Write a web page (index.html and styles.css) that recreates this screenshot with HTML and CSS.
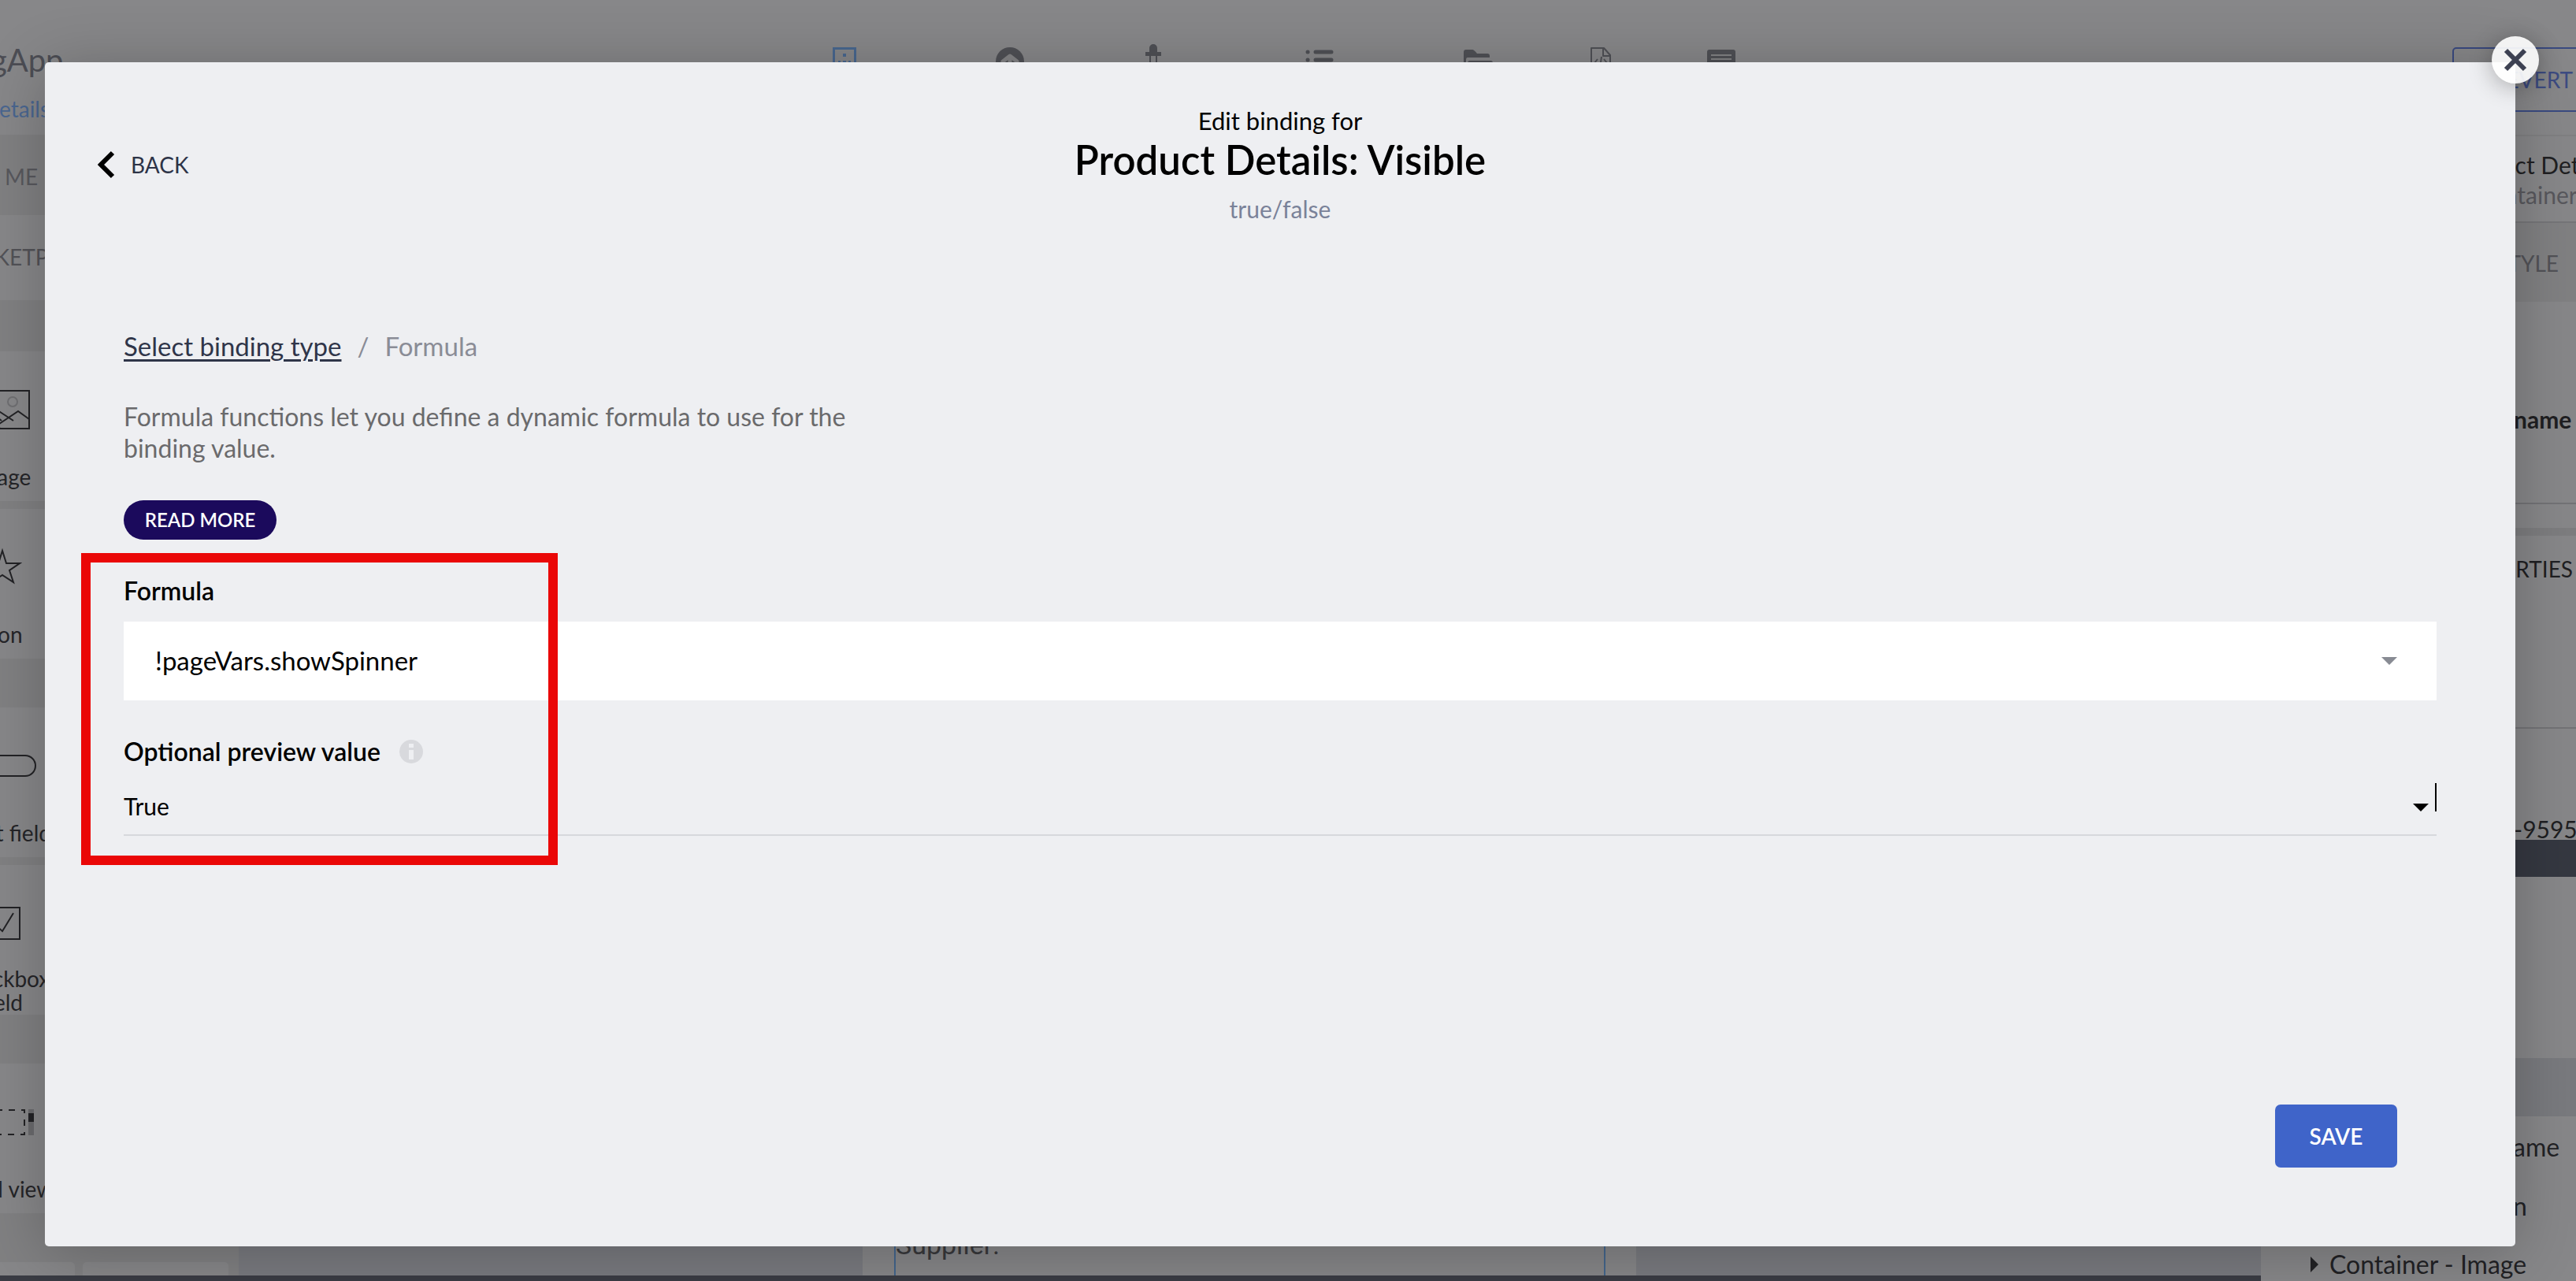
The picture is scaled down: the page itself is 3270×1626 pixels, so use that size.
FILE: index.html
```html
<!DOCTYPE html>
<html lang="en">
<head>
<meta charset="utf-8">
<title>Edit binding</title>
<link rel="stylesheet" href="styles.css">
</head>
<body>
<div class="app">
  <header class="topbar">
    <div class="brand">
      <span class="app-name">gApp</span>
      <a class="page-link" href="#">etails</a>
    </div>
    <nav class="tools">
      <svg class="tool active" viewBox="0 0 30 32" width="30" height="32"><path fill="none" stroke="currentColor" stroke-width="3" d="M1.500 1.500h27v28h-27z"/><path fill="currentColor" d="M13 8h4v4h-4zM7 17h3v4H7zM13 17h4v4h-4zM20 17h3v4h-3zM7 24h3v3H7zM13 24h4v3h-4zM20 24h3v3h-3z"/></svg>
      <svg class="tool" viewBox="0 0 36 36" width="36" height="36"><circle cx="18" cy="18" r="18" fill="currentColor"/><path class="cut" fill="none" stroke-width="5" stroke-linejoin="round" stroke-linecap="round" d="M9 18l9-7 9 7M18 13v15"/></svg>
      <svg class="tool pin" viewBox="0 0 20 40" width="20" height="40"><path fill="currentColor" d="M5 10V5a5 5 0 0 1 10 0v5h5v5H0v-5z"/><path fill="none" stroke="currentColor" stroke-width="2" d="M6 15v24M14 15v24"/></svg>
      <svg class="tool" viewBox="0 0 36 30" width="36" height="30"><path fill="none" stroke="currentColor" stroke-width="5" stroke-linecap="round" d="M3 6h.1M13 6h20M3 16h.1M13 16h20M3 26h.1M13 26h20"/></svg>
      <svg class="tool" viewBox="0 0 38 32" width="38" height="32"><path fill="currentColor" d="M0 28V6q0-3 3-3h8q2 0 6 5h13q3 0 3 3v2H5q-2 0-2 3v12zM5 32V20q0-3 3-3h26q3 0 3 3l-2 12z"/></svg>
      <svg class="tool" viewBox="0 0 26 34" width="26" height="34"><path fill="none" stroke="currentColor" stroke-width="2" stroke-linejoin="round" d="M1 1h16l8 9v23H1zM16 1v10h9M9 15l-4 5 4 5M14 12l-2 14M17 15l4 5-4 5"/></svg>
      <svg class="tool" viewBox="0 0 36 32" width="36" height="32"><rect y="3" width="36" height="28" rx="3" fill="currentColor"/><path class="cut" stroke-width="2" d="M5 10h26M5 15h26M5 20h26M5 25h26"/></svg>
    </nav>
    <button class="revert" type="button">REVERT</button>
  </header>

  <aside class="library">
    <div class="lib-tabs">ME</div>
    <div class="lib-market">MARKETPLACE</div>
    <div class="cards">
      <div class="card">
        <svg class="card-icon" viewBox="0 0 71 50" width="71" height="50"><path d="M1 1h69v48H1zM1 42l23-20 26 17M1 12l34 27M34 49l-8-2 30-20 14 10"/><circle class="faint" cx="49" cy="15" r="6"/></svg>
        <span class="card-label">Image</span>
      </div>
      <div class="card"></div>
      <div class="card">
        <svg class="card-icon" viewBox="0 0 50 48" width="50" height="48"><path d="M25 3l5 16h17L34 28l5 15-14-9-14 9 5-15L3 19h17z"/></svg>
        <span class="card-label">Icon</span>
      </div>
      <div class="card"></div>
    </div>
    <div class="cards">
      <div class="card">
        <svg class="card-icon" viewBox="0 0 87 28" width="87" height="28"><rect x="1" y="1" width="85" height="26" rx="13"/></svg>
        <span class="card-label">Input field</span>
      </div>
      <div class="card"></div>
      <div class="card">
        <svg class="card-icon" viewBox="0 0 46 42" width="46" height="42"><path d="M1 1h44v40H1zM11 20l12 11L37 8"/></svg>
        <span class="card-label">Checkbox field</span>
      </div>
      <div class="card"></div>
    </div>
    <div class="cards">
      <div class="card">
        <svg class="card-icon" viewBox="0 0 81 33" width="81" height="33"><rect x="1" y="1" width="68" height="31" stroke-dasharray="8 8"/><path class="fill-faint" d="M74 0h7v33h-7z"/><path class="fill" d="M74 5h7v11h-7z"/></svg>
        <span class="card-label">Scroll view</span>
      </div>
      <div class="card"></div>
    </div>
    <div class="cards">
      <div class="card"></div>
      <div class="card"></div>
    </div>
  </aside>

  <main class="canvas">
    <div class="screen"><div class="selected">Supplier:</div></div>
  </main>
  <div class="statusbar"></div>

  <aside class="inspector">
    <div class="insp-head"><strong>Product Details</strong><span>Container</span></div>
    <div class="insp-tabs">STYLE</div>
    <div class="insp-name">name</div>
    <div class="insp-section">PROPERTIES</div>
    <div class="insp-blank"></div>
    <div class="insp-id">-9595</div>
    <div class="insp-bar"></div>
    <div class="insp-space"></div>
    <div class="insp-selected"></div>
    <ul class="tree">
      <li class="tree-name">ame</li>
      <li class="tree-end">n</li>
      <li class="tree-item"><svg viewBox="0 0 10 20" width="10" height="20"><path fill="currentColor" d="M0 0l10 10L0 20z"/></svg>Container - Image</li>
    </ul>
  </aside>
</div>

<section class="modal" role="dialog" aria-labelledby="modal-title">
  <button class="close" type="button" aria-label="Close"><svg viewBox="0 0 30 30" width="30" height="30"><path fill="none" stroke="currentColor" stroke-width="6" d="M3 3l24 24M27 3L3 27"/></svg></button>
  <header class="modal-head">
    <button class="back" type="button"><svg viewBox="0 0 22 36" width="22" height="36"><path fill="none" stroke="currentColor" stroke-width="6" d="M19 3L4 18l15 15"/></svg>BACK</button>
    <div class="heading">
      <p class="overline">Edit binding for</p>
      <h1 id="modal-title">Product Details: Visible</h1>
      <p class="type">true/false</p>
    </div>
  </header>
  <div class="modal-body">
    <nav class="crumbs"><a href="#">Select binding type</a><span>/</span><span>Formula</span></nav>
    <p class="intro">Formula functions let you define a dynamic formula to use for the binding value.</p>
    <button class="read-more" type="button">READ MORE</button>
    <form class="fields">
      <label class="label" for="formula">Formula</label>
      <div class="formula-box">
        <input id="formula" type="text" value="!pageVars.showSpinner">
        <svg class="arrow muted" viewBox="0 0 20 10" width="20" height="10"><path fill="currentColor" d="M0 0h20L10 10z"/></svg>
      </div>
      <div class="label-row">
        <label class="label" for="preview">Optional preview value</label>
        <svg viewBox="0 0 30 30" width="30" height="30"><circle cx="15" cy="15" r="15" fill="#d8d9dd"/><path fill="#eeeff2" d="M12 5h6v5h-6zM12 13h6v12h-6z"/></svg>
      </div>
      <div class="preview-box">
        <select id="preview"><option>True</option><option>False</option></select>
        <svg class="arrow" viewBox="0 0 20 10" width="20" height="10"><path fill="currentColor" d="M0 0h20L10 10z"/></svg>
        <span class="caret"></span>
      </div>
      <div class="highlight"></div>
    </form>
  </div>
  <footer class="modal-foot"><button class="save" type="button">SAVE</button></footer>
</section>
</body>
</html>
```
FILE: styles.css
```css
* { box-sizing: border-box; }

body {
  margin: 0;
  height: 100vh;
  overflow: hidden;
  position: relative;
  font-family: Lato, "Open Sans", sans-serif;
  font-size: 28px;
  color: #1f1f22;
  background: #878789;
}

h1, p, ul { margin: 0; padding: 0; font-weight: 400; }
button, input, select { font: inherit; margin: 0; padding: 0; border: 0; background: none; color: inherit; }
svg { display: block; flex: none; }

/* Editor behind the dialog, scrolled 100px to the left */
.app {
  margin-left: -100px;
  height: 100%;
  display: grid;
  grid-template: 171px minmax(0, 1fr) 7px / 403px minmax(0, 1fr) 400px;
}

.topbar {
  grid-column: 1 / -1;
  display: flex;
  align-items: flex-start;
  overflow: hidden;
}
.brand {
  flex: 0 0 1066px;
  padding: 52px 0 0 88px;
  display: flex;
  flex-direction: column;
}
.app-name { font-size: 40px; line-height: 48px; color: #4c4d54; }
.page-link { line-height: 36px; margin-top: 20px; padding-left: 11px; color: #4a6690; text-decoration: none; }
.tools {
  display: grid;
  grid-template-columns: 211px 210px 154px 268px 136px 174px 132px;
  justify-items: center;
  align-items: start;
  padding-top: 60px;
  color: #4f5055;
}
.tools .active { color: #48678f; }
.tools .pin { margin-top: -4px; }
.cut { stroke: #838385; }
.revert {
  flex: 0 0 204px;
  height: 82px;
  margin: 60px -47px 0 auto;
  border: 2px solid #3a4a80;
  border-radius: 5px;
  color: #3d4c82;
}

.library { background: #808082; overflow: hidden; }
.lib-tabs { height: 102px; line-height: 106px; padding-left: 106px; color: #58585d; }
.lib-market { height: 108px; line-height: 106px; padding-left: 31px; background: #878789; color: #525257; }
.cards {
  display: grid;
  grid-template-columns: 185px 185px;
  grid-auto-rows: 190px;
  gap: 10px;
  padding: 62px 10px 0;
}
.lib-market + .cards { padding-top: 65px; }
.card {
  display: grid;
  grid-template-rows: 148px 22px;
  justify-items: center;
  align-items: center;
  border-radius: 5px;
  background: #878789;
}
.card-icon { fill: none; stroke: #222225; stroke-width: 2; }
.card-icon .faint { stroke: #6f6f72; }
.card-icon .fill { fill: #222225; stroke: none; }
.card-icon .fill-faint { fill: #6a6a6d; stroke: none; }
.card-label { line-height: 30px; padding: 0 10px; text-align: center; color: #252528; }

.canvas { display: flex; justify-content: center; background: #797a7f; }
.screen { width: 982px; margin-right: 1px; padding: 0 39px 0 40px; background: #868688; display: flex; }
.selected {
  flex: 1;
  display: flex;
  align-items: flex-end;
  padding-bottom: 19px;
  border: solid #43658c;
  border-width: 0 2px;
  font: 34px/40px Roboto, sans-serif;
  color: #38383b;
}
.statusbar { grid-column: 1 / 3; background: #3a3c44; }

.inspector {
  grid-area: 2 / 3 / 4 / 4;
  display: flex;
  flex-direction: column;
  overflow: hidden;
  white-space: nowrap;
  background: #878789;
}
.inspector > * { flex: none; }
.insp-head {
  height: 112px;
  padding: 17px 0 0 244px;
  border-top: 2px solid #808082;
  border-bottom: 2px solid #757578;
  display: flex;
  flex-direction: column;
  font-size: 30px;
  line-height: 38px;
}
.insp-head strong { font-weight: 400; }
.insp-head span { padding-left: 28px; color: #58585d; }
.insp-tabs { height: 100px; line-height: 102px; text-align: right; padding-right: 22px; background: #808082; color: #525257; }
.insp-name { height: 257px; padding: 131px 0 0 321px; border-bottom: 2px solid #737376; font-size: 30px; font-weight: 700; line-height: 36px; }
.insp-section { height: 128px; margin-top: 30px; border-top: 10px solid #7d7d7f; border-bottom: 32px solid transparent; line-height: 84px; text-align: right; padding-right: 4px; }
.insp-blank { height: 127px; border-bottom: 2px solid #737376; }
.insp-id { height: 141px; padding: 109px 0 0 321px; font-size: 30px; line-height: 36px; }
.insp-bar { height: 47px; background: #353841; }
.insp-space { height: 230px; }
.insp-selected { height: 74px; background: #797a7e; }
.tree { list-style: none; font-size: 32px; color: #222225; }
.tree li { height: 75px; line-height: 78px; }
.tree-name { padding-left: 320px; }
.tree-end { padding-left: 320px; }
.tree-item { display: flex; align-items: center; gap: 14px; padding-left: 63px; }

/* Dialog */
.modal {
  position: absolute;
  inset: 79px 77px 44px 57px;
  display: flex;
  flex-direction: column;
  border-radius: 5px;
  background: #eeeff2;
  color: #000;
  box-shadow: 0 8px 80px rgba(0, 0, 0, 0.24);
}
.close {
  position: absolute;
  top: -33px;
  right: -30px;
  width: 60px;
  height: 60px;
  display: grid;
  place-items: center;
  border-radius: 50%;
  background: rgba(255, 255, 255, 0.9);
  color: #3d4152;
  box-shadow: 0 4px 30px rgba(0, 0, 0, 0.3);
}
.modal-head {
  display: grid;
  grid-template-columns: 1fr auto 1fr;
  align-items: center;
  padding: 56px 67px 0;
}
.back { justify-self: start; display: flex; align-items: center; gap: 20px; color: #2d3347; }
.back svg { color: #000; }
.heading { grid-column: 2; text-align: center; }
.overline { font-size: 31px; line-height: 36px; }
.heading h1 { font-size: 51px; line-height: 64px; font-weight: 600; }
.type { margin-top: 12px; font-size: 30px; line-height: 36px; color: #7a8299; }

.modal-body { padding: 136px 100px 0; font-size: 32px; line-height: 40px; }
.crumbs { display: flex; gap: 20px; font-size: 33px; color: #8a8c96; }
.crumbs a { color: #2f3549; text-underline-offset: 4px; text-decoration-thickness: 3px; }
.intro { max-width: 960px; margin-top: 50px; color: #6a6a6c; }
.read-more {
  display: block;
  width: 194px;
  height: 50px;
  margin-top: 46px;
  border-radius: 25px;
  background: #1b0a5c;
  color: #fff;
  font-size: 24px;
  font-weight: 600;
}
.fields { position: relative; margin-top: 45px; }
.label { display: block; font-weight: 600; }
.formula-box { position: relative; height: 100px; margin: 19px 0 45px; background: #fff; }
.formula-box input { width: 100%; height: 100%; padding: 0 90px 2px 40px; font-size: 33px; }
.arrow { position: absolute; right: 10px; top: 33px; pointer-events: none; }
.arrow.muted { right: 50px; top: 45px; color: #888b93; }
.label-row { display: flex; align-items: center; gap: 24px; }
.preview-box { position: relative; height: 74px; margin-top: 13px; border-bottom: 2px solid #d6d8dc; }
.preview-box select { appearance: none; width: 100%; height: 100%; font-size: 30px; }
.caret { position: absolute; right: 0; top: 7px; width: 2px; height: 36px; background: #000; }
.highlight {
  position: absolute;
  left: -54px;
  top: -28px;
  width: 605px;
  height: 396px;
  border: 12px solid #ea0707;
  pointer-events: none;
}
.modal-foot { display: flex; justify-content: flex-end; margin-top: auto; padding: 0 150px 100px; }
.save { width: 155px; height: 80px; border-radius: 7px; background: #3f64c9; color: #fff; font-weight: 600; }
```
